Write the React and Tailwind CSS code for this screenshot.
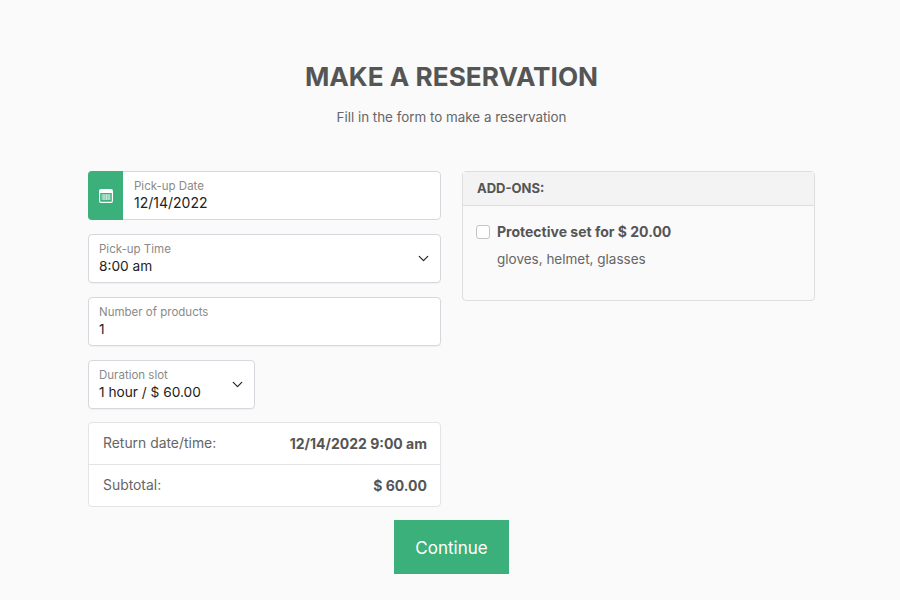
import { ChevronDown } from 'lucide-react';

const font = { fontFamily: 'Inter, "Noto Sans", sans-serif' };

function Field({ label, value, chevron, className = '' }) {
  return (
    <div className={`flex h-[49px] items-center justify-between rounded border border-[#d5d8dc] bg-white pl-[10px] pr-[8px] shadow-[0_1px_1px_rgba(0,0,0,0.04)] ${className}`}>
      <div>
        <div className="text-[11.5px] leading-[14px] text-[#8a8a8a]">{label}</div>
        <div className="text-[13.7px] leading-[20px] text-[#222]">{value}</div>
      </div>
      {chevron && <ChevronDown size={17} strokeWidth={1.7} className="text-[#222]" />}
    </div>
  );
}

function CalendarIcon() {
  return (
    <svg width="14" height="14" viewBox="0 0 14 14" fill="none">
      <rect x="0.6" y="0.6" width="12.8" height="12.8" rx="1.4" stroke="#fff" strokeWidth="1.2" />
      <rect x="1" y="1" width="12" height="3" fill="#fff" />
      <path d="M2.5 6h9M2.5 8h9M2.5 10h9" stroke="#fff" strokeOpacity="0.85" strokeWidth="1" />
      <path d="M5 5.5v5.5M7.5 5.5v5.5M10 5.5v5.5" stroke="#fff" strokeOpacity="0.5" strokeWidth="1" />
    </svg>
  );
}

export default function App() {
  return (
    <div className="min-h-[600px] bg-[#fafafa] pl-[88px] pt-[61px] text-[#555]" style={font}>
      <div className="w-[727px]">
        <h1 className="text-center text-[26.2px] font-bold leading-[32px] text-[#555]">MAKE A RESERVATION</h1>
        <p className="mt-[15px] text-center text-[13.4px] leading-[18px] text-[#666]">Fill in the form to make a reservation</p>

        <div className="mt-[45px] flex gap-[21px]">
          <div className="flex w-[353px] flex-col gap-[14px]">
            <div className="flex h-[49px] rounded border border-[#d5d8dc] bg-white">
              <div className="-my-px -ml-px flex w-[35px] items-center justify-center rounded-l bg-[#3bb07a]">
                <CalendarIcon />
              </div>
              <div className="pl-[11px] pt-[7px]">
                <div className="text-[11.5px] leading-[14px] text-[#8a8a8a]">Pick-up Date</div>
                <div className="text-[14px] leading-[19px] text-[#222]">12/14/2022</div>
              </div>
            </div>
            <Field label="Pick-up Time" value="8:00 am" chevron />
            <Field label="Number of products" value="1" />
            <Field label="Duration slot" value="1 hour / $ 60.00" chevron className="w-[167px]" />
            <div className="-mt-px rounded border border-[#e2e4e7] bg-white">
              <div className="flex h-[42px] items-center justify-between border-b border-[#e2e4e7] pl-[14px] pr-[13px]">
                <span className="text-[13.9px] text-[#666]">Return date/time:</span>
                <span className="text-[14px] font-bold text-[#555]">12/14/2022 9:00 am</span>
              </div>
              <div className="flex h-[41px] items-center justify-between pl-[14px] pr-[13px]">
                <span className="text-[13.9px] text-[#666]">Subtotal:</span>
                <span className="text-[14px] font-bold text-[#555]">$ 60.00</span>
              </div>
            </div>
          </div>

          <div className="h-[130px] w-[353px] rounded border border-[#dedede] bg-[#fafafa]">
            <div className="flex h-[34px] items-center border-b border-[#dedede] bg-[#f3f3f3] px-[14px] text-[13px] font-bold text-[#555]">ADD-ONS:</div>
            <div className="pl-[13px] pr-[14px] pt-[17px]">
              <div className="flex items-center gap-[7px]">
                <span className="h-[14px] w-[14px] rounded-[3px] border border-[#c4c4c4] bg-white" />
                <span className="text-[14px] font-bold leading-[18px] text-[#555]">Protective set for $ 20.00</span>
              </div>
              <div className="mt-[9px] pl-[21px] text-[13.5px] leading-[18px] text-[#666]">gloves, helmet, glasses</div>
            </div>
          </div>
        </div>

        <div className="mt-[13px] flex justify-center">
          <button className="h-[54px] w-[115px] bg-[#3bb07a] pt-[3px] text-[17px] text-white">Continue</button>
        </div>
      </div>
    </div>
  );
}
